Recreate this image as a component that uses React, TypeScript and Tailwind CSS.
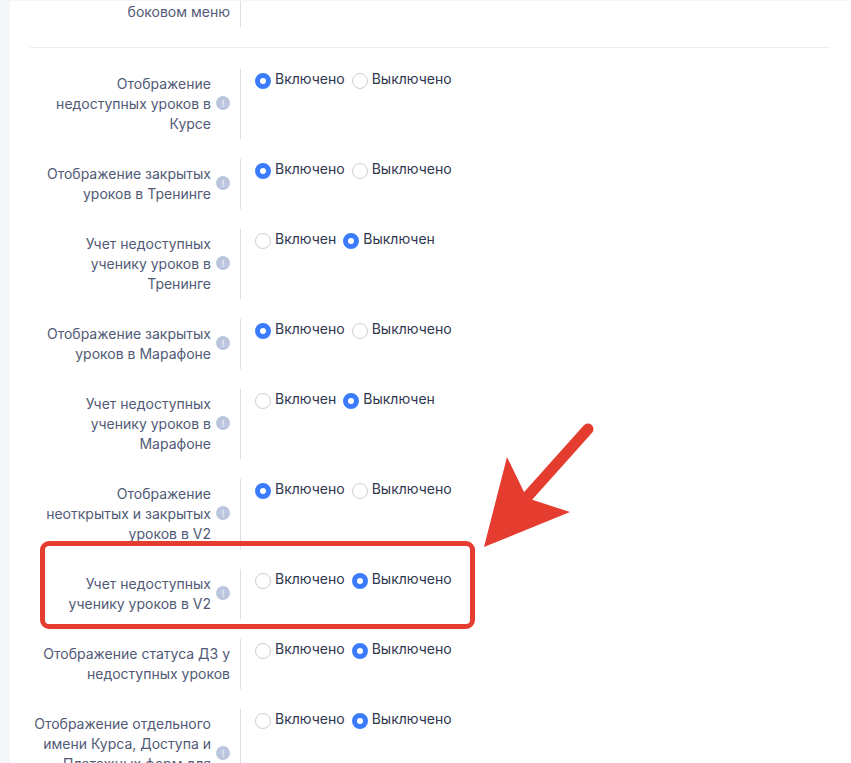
type Row = {
  label: string[];
  hint?: boolean;
  on: boolean;
  short?: boolean;
  tall?: boolean;
};

const rows: Row[] = [
  { label: ["Отображение", "недоступных уроков в", "Курсе"], hint: true, on: true },
  { label: ["Отображение закрытых", "уроков в Тренинге"], hint: true, on: true },
  { label: ["Учет недоступных", "ученику уроков в", "Тренинге"], hint: true, on: false, short: true },
  { label: ["Отображение закрытых", "уроков в Марафоне"], hint: true, on: true },
  { label: ["Учет недоступных", "ученику уроков в", "Марафоне"], hint: true, on: false, short: true },
  { label: ["Отображение", "неоткрытых и закрытых", "уроков в V2"], hint: true, on: true },
  { label: ["Учет недоступных", "ученику уроков в V2"], hint: true, on: false },
  { label: ["Отображение статуса ДЗ у", "недоступных уроков"], on: false },
  { label: ["Отображение отдельного", "имени Курса, Доступа и", "Платежных форм для"], hint: true, on: false, tall: true },
];

function Radio({ checked, text }: { checked: boolean; text: string }) {
  return (
    <div className="flex items-start gap-1">
      <span
        className={
          checked
            ? "mt-[4px] h-4 w-4 rounded-full border-[5px] border-[#3b7cff] bg-white"
            : "mt-[4px] h-4 w-4 rounded-full border border-[#cfcfcf] bg-white"
        }
      />
      <span className="text-sm leading-5 text-[#2f3750]">{text}</span>
    </div>
  );
}

function SettingRow({ row }: { row: Row }) {
  return (
    <div className={row.tall ? "flex min-h-[90px]" : "flex"}>
      <div className="flex w-[211px] shrink-0 items-center justify-end gap-[5px] border-r border-[#dcdfe6] py-[5px] pr-[10px] text-right text-sm leading-5 text-[#515a76]">
        <div className="self-start">
          {row.label.map((line) => (
            <div key={line} className="whitespace-nowrap">{line}</div>
          ))}
        </div>
        {row.hint && (
          <span className="mb-[2px] flex h-[14px] w-[14px] shrink-0 items-center justify-center rounded-full bg-[#bcc7de] text-[9px] font-bold leading-none text-[#e4e9f3]">
            !
          </span>
        )}
      </div>
      <div className="flex items-start gap-[7px] pl-[14px]">
        <Radio checked={row.on} text={row.short ? "Включен" : "Включено"} />
        <Radio checked={!row.on} text={row.short ? "Выключен" : "Выключено"} />
      </div>
    </div>
  );
}

export default function App() {
  return (
    <div className="relative h-[763px] w-[851px] overflow-hidden bg-[#f5f6fa] pl-[10px] pt-px font-['Inter',sans-serif]">
      <div className="h-full overflow-hidden bg-white pl-5 pr-[21px]">
        <div className="-mt-[4px] flex">
          <div className="w-[211px] border-r border-[#dcdfe6] py-[5px] pr-[10px] text-right text-sm leading-5 text-[#515a76]">
            боковом меню
          </div>
        </div>

        <div className="mb-[21px] mt-5 h-px bg-[#eceef2]" />

        <div className="flex flex-col gap-5">
          {rows.map((row) => (
            <SettingRow key={row.label.join(" ")} row={row} />
          ))}
        </div>
      </div>

      {/* red annotation */}
      <div className="absolute left-[40px] top-[541px] h-[88px] w-[435px] rounded-[9px] border-[5px] border-[#e53c30]" />
      <svg className="absolute left-[470px] top-[410px]" width="130" height="150" viewBox="0 0 130 150">
        <polygon points="14,137 37,47 54,82 63,90 100,102" fill="#e53c30" />
        <line x1="58" y1="86" x2="118" y2="19" stroke="#e53c30" strokeWidth="11" strokeLinecap="round" />
      </svg>
    </div>
  );
}
